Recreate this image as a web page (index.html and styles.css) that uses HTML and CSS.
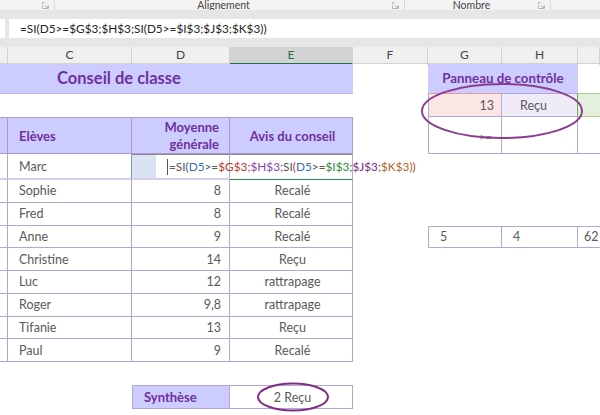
FILE: index.html
```html
<!DOCTYPE html>
<html lang="fr">

<head>
    <meta charset="UTF-8">
    <meta name="viewport" content="width=device-width, initial-scale=1.0">
    <title>Conseil de classe</title>
    <link rel="stylesheet" href="styles.css">
</head>

<body>
    <div class="page">
        <!-- ribbon bottom strip -->
        <div class="ribbon">
            <div class="group group-first">
                <svg class="launch" width="7" height="7" viewBox="0 0 7 7"><path d="M0.5 2.5v-2h2 M0.5 3.5v3h6v-3 M3 3l3 3 M4 6h2v-2" fill="none" stroke="#a8a8a8" stroke-width="0.8"/></svg>
            </div>
            <div class="group group-align">
                <span class="group-label">Alignement</span>
                <svg class="launch" width="7" height="7" viewBox="0 0 7 7"><path d="M0.5 2.5v-2h2 M0.5 3.5v3h6v-3 M3 3l3 3 M4 6h2v-2" fill="none" stroke="#a8a8a8" stroke-width="0.8"/></svg>
            </div>
            <div class="group group-num">
                <span class="group-label">Nombre</span>
                <svg class="launch" width="7" height="7" viewBox="0 0 7 7"><path d="M0.5 2.5v-2h2 M0.5 3.5v3h6v-3 M3 3l3 3 M4 6h2v-2" fill="none" stroke="#a8a8a8" stroke-width="0.8"/></svg>
            </div>
        </div>
        <div class="gap-top"></div>

        <!-- formula bar -->
        <div class="fbar">
            <div class="namebox-end"></div>
            <div class="fx">=SI(D5&gt;=$G$3;$H$3;SI(D5&gt;=$I$3;$J$3;$K$3))</div>
        </div>
        <div class="gap-mid"></div>

        <!-- column letters -->
        <div class="colheads">
            <div class="ch"></div>
            <div class="ch">C</div>
            <div class="ch">D</div>
            <div class="ch ch-active">E</div>
            <div class="ch">F</div>
            <div class="ch">G</div>
            <div class="ch">H</div>
            <div class="ch"></div>
        </div>

        <div class="sheet">
            <!-- left table -->
            <div class="left">
                <div class="title-row"><span class="title">Conseil de classe</span></div>
                <div class="blank-row"></div>
                <div class="row head-row">
                    <div class="cell"></div>
                    <div class="cell">Elèves</div>
                    <div class="cell num two-lines">Moyenne<br>générale</div>
                    <div class="cell mid">Avis du conseil</div>
                </div>
                <div class="row data-row first-row">
                    <div class="cell"></div>
                    <div class="cell">Marc</div>
                    <div class="cell edit-cell">
                        <span class="sel-block"></span>
                        <span class="edit"><span class="t-gray">=SI(</span><span class="t-blue">D5</span><span class="t-gray">&gt;=</span><span class="t-red">$G$3</span><span class="t-gray">;</span><span class="t-purple">$H$3</span><span class="t-gray">;SI</span><span class="t-red">(</span><span class="t-blue">D5</span><span class="t-gray">&gt;=</span><span class="t-green">$I$3</span><span class="t-gray">;</span><span class="t-violet">$J$3</span><span class="t-gray">;</span><span class="t-brown">$K$3</span><span class="t-brown">)</span><span class="t-red">)</span></span>
                    </div>
                    <div class="cell active-col"></div>
                </div>
                <div class="row data-row">
                    <div class="cell"></div><div class="cell">Sophie</div><div class="cell num">8</div><div class="cell mid">Recalé</div>
                </div>
                <div class="row data-row">
                    <div class="cell"></div><div class="cell">Fred</div><div class="cell num">8</div><div class="cell mid">Recalé</div>
                </div>
                <div class="row data-row">
                    <div class="cell"></div><div class="cell">Anne</div><div class="cell num">9</div><div class="cell mid">Recalé</div>
                </div>
                <div class="row data-row">
                    <div class="cell"></div><div class="cell">Christine</div><div class="cell num">14</div><div class="cell mid">Reçu</div>
                </div>
                <div class="row data-row">
                    <div class="cell"></div><div class="cell">Luc</div><div class="cell num">12</div><div class="cell mid">rattrapage</div>
                </div>
                <div class="row data-row">
                    <div class="cell"></div><div class="cell">Roger</div><div class="cell num">9,8</div><div class="cell mid">rattrapage</div>
                </div>
                <div class="row data-row">
                    <div class="cell"></div><div class="cell">Tifanie</div><div class="cell num">13</div><div class="cell mid">Reçu</div>
                </div>
                <div class="row data-row">
                    <div class="cell"></div><div class="cell">Paul</div><div class="cell num">9</div><div class="cell mid">Recalé</div>
                </div>
                <div class="blank-row"></div>
                <div class="row synth-row">
                    <div></div>
                    <div></div>
                    <div class="cell synth-label">Synthèse</div>
                    <div class="cell mid synth-value">2 Reçu</div>
                </div>
            </div>

            <!-- control panel -->
            <div class="right">
                <div class="prow prow-title">
                    <div></div>
                    <div class="panel-title">Panneau de contrôle</div>
                    <div></div>
                </div>
                <div class="prow prow-values">
                    <div></div>
                    <div class="pcell pink num">13</div>
                    <div class="pcell lav">Reçu</div>
                    <div class="pcell green"></div>
                </div>
                <div class="prow prow-cond">
                    <div></div>
                    <div class="pcell num"><span class="cond">&gt;=</span></div>
                    <div class="pcell"></div>
                    <div class="pcell edge"></div>
                </div>
                <div class="prow prow-spacer"></div>
                <div class="prow prow-counts">
                    <div></div>
                    <div class="pcell">5</div>
                    <div class="pcell">4</div>
                    <div class="pcell edge">62</div>
                </div>
            </div>
        </div>

        <!-- hand drawn circles over the sheet -->
        <svg class="ring ring-panel" width="166" height="60" viewBox="0 0 166 60">
            <ellipse cx="83" cy="30" rx="80" ry="27" fill="none" stroke="#8b3d90" stroke-width="2"/>
        </svg>
        <svg class="ring ring-synth" width="76" height="32" viewBox="0 0 76 32">
            <ellipse cx="38" cy="16" rx="35" ry="13.5" fill="none" stroke="#7e2f86" stroke-width="2"/>
        </svg>
    </div>
</body>

</html>
```

FILE: styles.css
```css
* {
    box-sizing: border-box;
}

body {
    margin: 0px;
    padding: 0px;
    background: #ffffff;
    font-family: Lato, "Open Sans", sans-serif;
}

.page {
    position: relative;
    width: 600px;
    height: 415px;
    overflow: hidden;
}

/* ribbon */
.ribbon {
    display: flex;
    height: 10px;
    background: #f3f3f3;
    overflow: hidden;
    font-size: 10.5px;
    color: #444444;
}

.group {
    display: flex;
    align-items: center;
    height: 10px;
    padding-right: 5px;
    border-right: 1px solid #d8d8d8;
}

.group-first {
    width: 55px;
    justify-content: flex-end;
}

.group-align {
    width: 350px;
}

.group-num {
    width: 146px;
}

.group-label {
    flex: 1;
    text-align: center;
    line-height: 10px;
}

.launch {
    display: block;
}

.gap-top {
    height: 9px;
    background: #e6e6e6;
}

/* formula bar */
.fbar {
    display: flex;
    height: 19px;
    background: #e6e6e6;
}

.namebox-end {
    width: 5px;
    background: #ffffff;
}

.fx {
    flex: 1;
    margin-left: 4px;
    padding-left: 11px;
    background: #ffffff;
    font-size: 11.8px;
    line-height: 19px;
    color: #262626;
    white-space: nowrap;
}

.gap-mid {
    height: 9px;
    background: #e6e6e6;
}

/* column letters */
.colheads {
    display: grid;
    grid-template-columns: 8px 124px 98px 123px 75px 74px 76px 22px;
    height: 17px;
    background: #f0f0f0;
    border-bottom: 1px solid #d2d2d2;
}

.ch {
    border-right: 1px solid #d2d2d2;
    text-align: center;
    font-size: 12px;
    line-height: 16px;
    color: #444444;
}

.ch-active {
    background: #d3d3d3;
    color: #217346;
    border-bottom: 2px solid #217346;
}

/* sheet */
.sheet {
    display: flex;
}

.left {
    width: 353px;
}

.right {
    flex: 1;
}

.title-row {
    height: 30px;
    background: #ccccff;
    border-bottom: 1px solid #bdb8ee;
}

.title {
    display: block;
    width: 222px;
    margin-left: 8px;
    text-align: center;
    font-size: 16.5px;
    font-weight: 700;
    line-height: 29px;
    color: #7030a0;
}

.blank-row {
    height: 23px;
}

.row {
    display: grid;
    grid-template-columns: 8px 124px 98px 123px;
}

.cell {
    display: flex;
    align-items: center;
    padding: 0px 8px 0px 11px;
    border-right: 1px solid #b4a7d6;
    border-bottom: 1px solid #b4a7d6;
    font-size: 12.5px;
    color: #595959;
    white-space: nowrap;
}

.row .cell:first-child {
    padding: 0px;
}

.num {
    justify-content: flex-end;
    text-align: right;
}

.mid {
    justify-content: center;
}

.head-row {
    height: 37px;
    background: #ccccff;
    border-top: 1px solid #a99ad0;
}

.head-row .cell {
    border-color: #a99ad0;
    font-size: 13px;
    font-weight: 700;
    color: #7030a0;
}

.two-lines {
    line-height: 17px;
    padding-right: 10px;
}

.data-row {
    height: 22.75px;
}

.first-row {
    height: 26px;
}

.first-row .cell {
    border-bottom: 2px solid #d6cfec;
}

.edit-cell {
    position: relative;
    padding: 0px;
    border-left: 1px solid #8097c2;
    border-top: 1px solid #8a8a8a;
    margin-left: -1px;
    overflow: visible;
}

.sel-block {
    display: block;
    width: 24px;
    height: 100%;
    background: #dae3f3;
}

.edit {
    position: absolute;
    left: 35px;
    top: 4px;
    z-index: 2;
    padding-left: 1px;
    border-left: 1px solid #555555;
    font-size: 11.8px;
    line-height: 16px;
    white-space: nowrap;
}

.t-gray { color: #555555; }
.t-blue { color: #3a6fb5; }
.t-red { color: #c0392b; }
.t-purple { color: #8e44ad; }
.t-green { color: #2e8b3a; }
.t-violet { color: #7a2d8c; }
.t-brown { color: #b5651d; }

.active-col {
    border-bottom: 1px solid #2f8a4e !important;
    border-top: 1px solid #8a8a8a;
}

.synth-row {
    height: 24px;
}

.synth-row .cell {
    border-top: 1px solid #b4a7d6;
}

.synth-label {
    background: #ccccff;
    border-left: 1px solid #b4a7d6;
    font-size: 13px !important;
    font-weight: 700;
    color: #7030a0 !important;
}

/* control panel */
.prow {
    display: grid;
    grid-template-columns: 75px 74px 76px 1fr;
}

.prow-title {
    height: 29px;
}

.panel-title {
    grid-column: 2 / 4;
    background: #ccccff;
    text-align: center;
    font-size: 13.3px;
    font-weight: 700;
    line-height: 29px;
    color: #7030a0;
}

.pcell {
    display: flex;
    align-items: center;
    padding: 0px 11px;
    border-right: 1px solid #b4a7d6;
    border-bottom: 1px solid #b4a7d6;
    font-size: 12.5px;
    color: #595959;
}

.prow .pcell:nth-child(2) {
    border-left: 1px solid #b4a7d6;
}

.prow-values {
    height: 24px;
}

.pink {
    background: #fbe5e5;
    border-top: 1px solid #df9d9d;
    padding-right: 7px;
}

.lav {
    background: #f0ebf8;
    border-top: 1px solid #b4a7d6;
    padding-left: 18px;
}

.green {
    background: #e4f0dd;
    border-top: 1px solid #a9d08e;
    border-bottom: 1px solid #a9d08e;
    border-right: none;
    border-left: 1px solid #70ad47;
    margin-left: -1px;
}

.prow-cond {
    height: 37px;
}

.prow-cond .pcell.num {
    align-items: flex-start;
    padding-top: 13px;
    padding-right: 9px;
}

.cond {
    font-size: 11px;
    color: #8a8a8a;
}

.edge {
    border-right: none;
    border-left: 1px solid #b4a7d6;
    margin-left: -1px;
    padding: 0px 6px;
}

.prow-spacer {
    height: 71.5px;
}

.prow-counts {
    height: 22.75px;
    border-top: 1px solid #b4a7d6;
}

.prow-counts > div:first-child {
    margin-top: -1px;
    background: #ffffff;
}

/* circles */
.ring {
    position: absolute;
}

.ring-panel {
    left: 419px;
    top: 81px;
}

.ring-synth {
    left: 255px;
    top: 381px;
}
```
